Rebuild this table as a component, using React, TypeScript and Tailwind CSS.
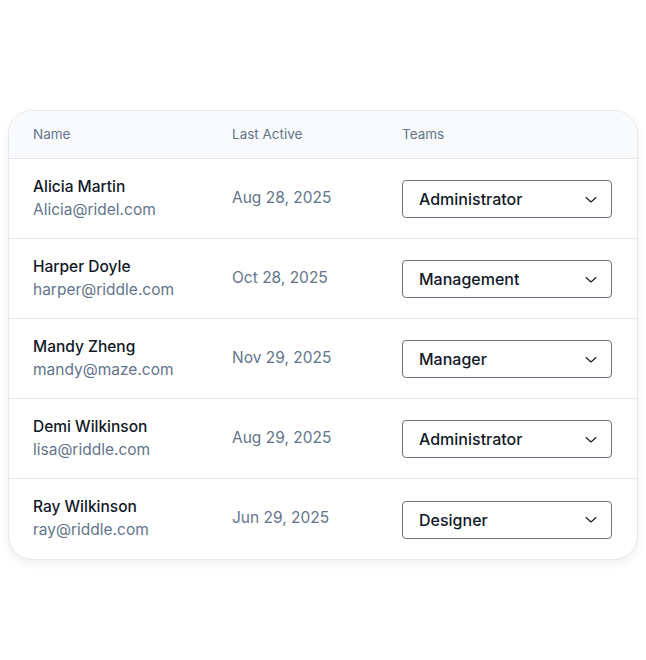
import React from 'react';

type Member = {
  name: string;
  email: string;
  lastActive: string;
  team: string;
};

const members: Member[] = [
  { name: 'Alicia Martin', email: 'Alicia@ridel.com', lastActive: 'Aug 28, 2025', team: 'Administrator' },
  { name: 'Harper Doyle', email: 'harper@riddle.com', lastActive: 'Oct 28, 2025', team: 'Management' },
  { name: 'Mandy Zheng', email: 'mandy@maze.com', lastActive: 'Nov 29, 2025', team: 'Manager' },
  { name: 'Demi Wilkinson', email: 'lisa@riddle.com', lastActive: 'Aug 29, 2025', team: 'Administrator' },
  { name: 'Ray Wilkinson', email: 'ray@riddle.com', lastActive: 'Jun 29, 2025', team: 'Designer' },
];

const Chevron = () => (
  <svg width="12" height="7" viewBox="0 0 12 7" fill="none" stroke="#111827" strokeWidth="1.1" strokeLinecap="round" strokeLinejoin="round">
    <path d="M1 1.5l5 4.5 5-4.5" />
  </svg>
);

const App: React.FC = () => {
  return (
    <div className="w-[646px] h-[660px] bg-white pt-[110px] px-[8px] font-['Inter',sans-serif]">
      <div className="w-[630px] rounded-[24px] border border-[#e5e7eb] bg-white shadow-[0_4px_10px_rgba(15,23,42,0.06)] overflow-hidden">
        {/* header */}
        <div className="grid grid-cols-[199px_170px_1fr] h-[48px] items-center bg-[#f8fafc] border-b border-[#e5e7eb] pl-[24px] text-[13.5px] text-[#64748b]">
          <div>Name</div>
          <div>Last Active</div>
          <div>Teams</div>
        </div>
        {members.map((m, i) => (
          <div
            key={i}
            className={`grid grid-cols-[199px_170px_1fr] h-[80px] items-center pl-[24px] pr-[25px] ${i < members.length - 1 ? 'border-b border-[#e5e7eb]' : ''}`}
          >
            <div className="flex flex-col mb-[2px]">
              <span className="text-[15.5px] leading-[23px] font-medium text-[#111827]">{m.name}</span>
              <span className="text-[15.5px] leading-[23px] text-[#64748b]">{m.email}</span>
            </div>
            <div className="text-[15.5px] text-[#64748b] mb-[2px]">{m.lastActive}</div>
            <div className="flex items-center justify-between h-[38px] mt-[1px] rounded-[4px] border border-[#6b7280] pl-[16px] pr-[14px]">
              <span className="text-[16px] font-medium text-[#111827]">{m.team}</span>
              <Chevron />
            </div>
          </div>
        ))}
      </div>
    </div>
  );
};

export default App;
